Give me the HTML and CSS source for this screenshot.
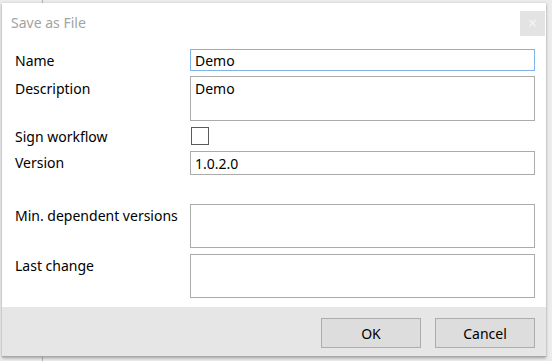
FILE: index.html
```html
<!DOCTYPE html>
<html lang="en">
  <head>
    <meta charset="UTF-8" />
    <title>Save as File</title>
    <link rel="stylesheet" href="styles.css">
  </head>
  <body>
    <div class="save-dialog">
      <div class="dialog-header">
        <span class="dialog-title">Save as File</span>
        <button class="close-button">&times;</button>
      </div>
      <div class="dialog-form">
        <label class="form-label" for="fileName">Name</label>
        <input class="form-input name-input" id="fileName" type="text" value="Demo" />

        <label class="form-label" for="fileDescription">Description</label>
        <textarea class="form-input area-input desc-input" id="fileDescription">Demo</textarea>

        <label class="form-label sign-label" for="signWorkflow">Sign workflow</label>
        <div class="check-holder">
          <input class="form-check" id="signWorkflow" type="checkbox" />
        </div>

        <label class="form-label" for="fileVersion">Version</label>
        <input class="form-input version-input" id="fileVersion" type="text" value="1.0.2.0" />

        <label class="form-label min-label" for="minVersions">Min. dependent versions</label>
        <textarea class="form-input area-input min-input" id="minVersions"></textarea>

        <label class="form-label" for="lastChange">Last change</label>
        <textarea class="form-input area-input" id="lastChange"></textarea>
      </div>
      <div class="dialog-footer">
        <button class="footer-button">OK</button>
        <button class="footer-button">Cancel</button>
      </div>
    </div>
  </body>
</html>
```

FILE: styles.css
```css
html,
body {
  height: 100%;
}

body {
  margin: 0;
  padding: 3px 6px 4px 2px;
  box-sizing: border-box;
  background-color: #ececec;
  background-image: linear-gradient(
    to right,
    transparent 42px,
    #b4b4b4 42px,
    #b4b4b4 43px,
    transparent 43px
  );
  font-family: "Noto Sans", "Open Sans", sans-serif;
}

.save-dialog {
  display: flex;
  flex-direction: column;
  height: 100%;
  background-color: #fff;
  box-shadow: 0 1px 3px rgba(0, 0, 0, 0.35);
}

.dialog-header {
  display: flex;
  justify-content: space-between;
  align-items: flex-start;
  height: 46px;
  flex-shrink: 0;
  padding: 8px 1px 0 9px;
  box-sizing: border-box;
}
.dialog-title {
  font-size: 14px;
  line-height: 20px;
  color: #a3a3a3;
  margin-top: 2px;
}
.close-button {
  width: 25px;
  height: 25px;
  padding: 0;
  border: none;
  background-color: #e3e3e3;
  color: #f4f4f4;
  font-family: "Noto Sans", sans-serif;
  font-size: 16px;
  line-height: 25px;
}

.dialog-form {
  display: grid;
  grid-template-columns: 175px 1fr;
  align-content: start;
  row-gap: 6px;
  padding: 0 11px 0 13px;
  flex: 1;
}
.form-label {
  font-size: 14px;
  line-height: 18px;
  color: #000;
  padding-top: 3px;
}
.sign-label {
  padding-top: 1px;
  line-height: 17px;
}
.form-input {
  box-sizing: border-box;
  display: block;
  width: 100%;
  height: 22px;
  margin: 0;
  border: 1px solid #ababab;
  padding: 1px 4px;
  font-family: "Noto Sans", "Open Sans", sans-serif;
  font-size: 14px;
  line-height: 18px;
  color: #000;
  outline: none;
}
.name-input {
  border-color: #7eb4ea;
}
.area-input {
  height: 44px;
  resize: none;
  padding-top: 3px;
}
.desc-input {
  height: 45px;
  margin-top: -1px;
}
.check-holder {
  margin-left: 1px;
}
.form-check {
  appearance: none;
  display: block;
  width: 18px;
  height: 18px;
  margin: 0;
  border: 1px solid #5a5a5a;
  background-color: #fff;
}
.version-input {
  height: 24px;
}
.min-label,
.min-input {
  margin-top: 23px;
}

.dialog-footer {
  display: flex;
  justify-content: flex-end;
  gap: 14px;
  height: 50px;
  flex-shrink: 0;
  padding: 11px 11px 0 0;
  box-sizing: border-box;
  background-color: #e6e6e6;
  border-bottom: 1px solid #a8a8a8;
}
.footer-button {
  width: 100px;
  height: 30px;
  border: 1px solid #adadad;
  background-color: #dddddd;
  font-family: "Noto Sans", "Open Sans", sans-serif;
  font-size: 14px;
  color: #000;
}
```
